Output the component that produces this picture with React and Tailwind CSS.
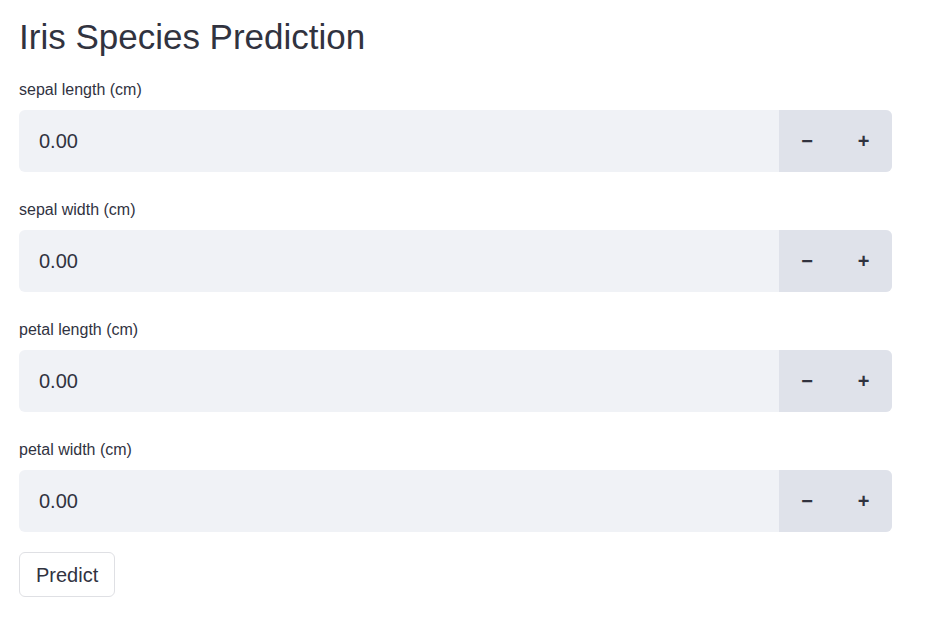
import React from 'react';

const fields = ['sepal length (cm)', 'sepal width (cm)', 'petal length (cm)', 'petal width (cm)'];

const NumberField = ({ label }) => (
  <div className="flex flex-col">
    <label className="text-[16px] leading-[20px] h-[20px] mb-[10px]">{label}</label>
    <div className="flex h-[62px] w-[873px] rounded-md overflow-hidden bg-[#f0f2f6]">
      <div className="flex-1 flex items-center pl-[20px] text-[20px]">0.00</div>
      <div className="flex bg-[#dfe2ea]">
        <button className="w-[56px] flex items-center justify-center text-[20px] font-bold">−</button>
        <button className="w-[57px] flex items-center justify-center text-[20px] font-bold">+</button>
      </div>
    </div>
  </div>
);

const App = () => {
  return (
    <div className="min-h-screen bg-white text-[#31333f] font-['Liberation_Sans',Arial,sans-serif] px-[19px] pt-[15px]">
      <h1 className="text-[35px] leading-[44px] mb-[21px]">Iris Species Prediction</h1>
      <div className="flex flex-col gap-[28px]">
        {fields.map((f) => (
          <NumberField key={f} label={f} />
        ))}
      </div>
      <button className="mt-[20px] h-[45px] px-[16px] border border-[#dfe0e4] rounded-md text-[20px]">Predict</button>
    </div>
  );
};

export default App;
